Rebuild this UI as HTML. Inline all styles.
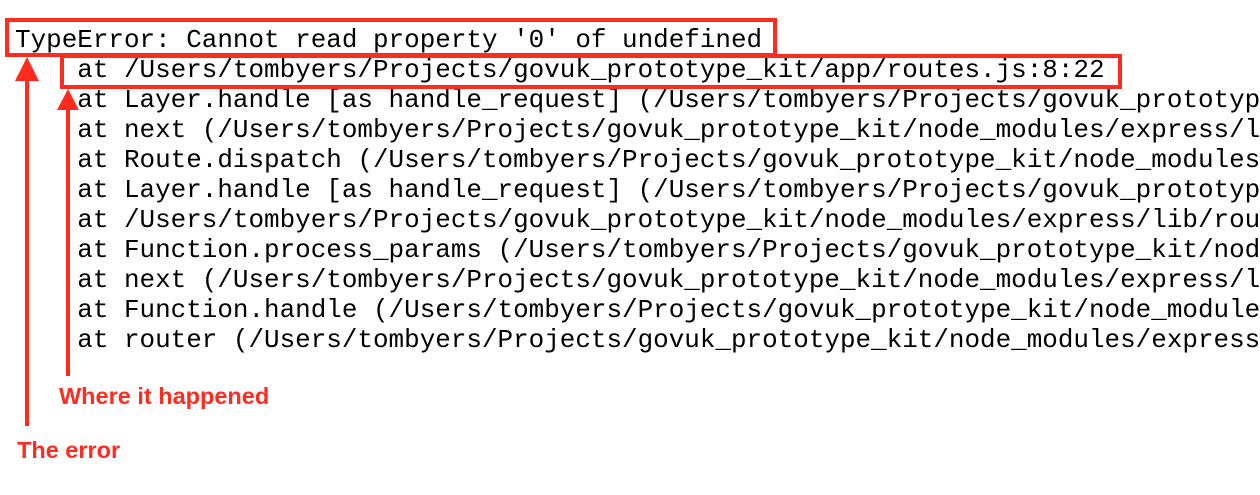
<!DOCTYPE html>
<html><head><style>
html,body{margin:0;padding:0;background:#fff;width:1260px;height:495px;overflow:hidden;position:relative}
.wrap{position:absolute;left:0;top:0;width:1260px;height:495px;overflow:hidden}
pre{position:absolute;left:15px;top:25px;margin:0;font-family:"Liberation Mono",monospace;font-size:25.95px;line-height:30px;color:#000;white-space:pre}
.box{position:absolute;border:4px solid #ff2b1f;box-sizing:border-box}
.lbl{position:absolute;font-family:"Liberation Sans",sans-serif;font-weight:bold;font-size:23.5px;color:#ff2b1f;white-space:nowrap}
</style></head><body>
<div class="wrap">
<pre>TypeError: Cannot read property '0' of undefined
    at /Users/tombyers/Projects/govuk_prototype_kit/app/routes.js:8:22
    at Layer.handle [as handle_request] (/Users/tombyers/Projects/govuk_prototyp
    at next (/Users/tombyers/Projects/govuk_prototype_kit/node_modules/express/l
    at Route.dispatch (/Users/tombyers/Projects/govuk_prototype_kit/node_modules
    at Layer.handle [as handle_request] (/Users/tombyers/Projects/govuk_prototyp
    at /Users/tombyers/Projects/govuk_prototype_kit/node_modules/express/lib/rou
    at Function.process_params (/Users/tombyers/Projects/govuk_prototype_kit/nod
    at next (/Users/tombyers/Projects/govuk_prototype_kit/node_modules/express/l
    at Function.handle (/Users/tombyers/Projects/govuk_prototype_kit/node_module
    at router (/Users/tombyers/Projects/govuk_prototype_kit/node_modules/express</pre>
<div class="box" style="left:5px;top:18px;width:772px;height:39px"></div>
<div class="box" style="left:60px;top:54px;width:1062px;height:35px"></div>
<svg width="1260" height="495" style="position:absolute;left:0;top:0">
<g fill="#ff2b1f">
<rect x="25" y="75" width="4" height="351"/>
<polygon points="27,57 15,81 39,81"/>
<rect x="66" y="105" width="4" height="271"/>
<polygon points="68,89 57,110 79,110"/>
</g></svg>
<div class="lbl" style="left:59px;top:383px">Where it happened</div>
<div class="lbl" style="left:17px;top:437px">The error</div>
</div>
</body></html>
